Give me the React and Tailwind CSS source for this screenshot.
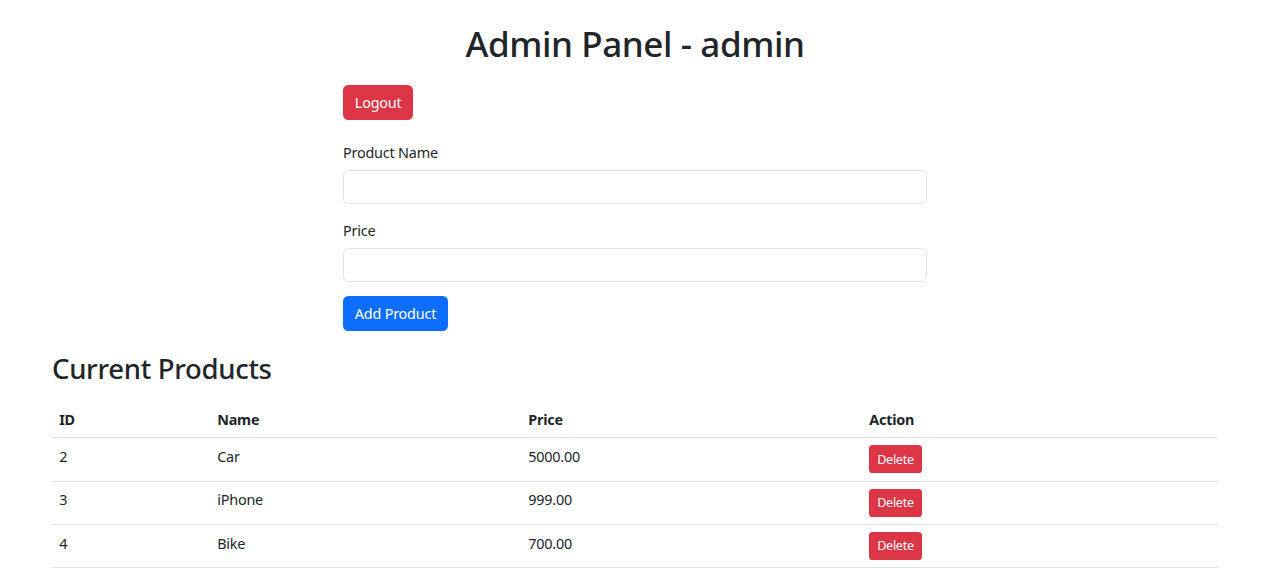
const products = [
  { id: 2, name: 'Car', price: '5000.00' },
  { id: 3, name: 'iPhone', price: '999.00' },
  { id: 4, name: 'Bike', price: '700.00' },
];

export default function App() {
  return (
    <div className="min-h-screen bg-white text-[#212529] font-['Noto_Sans',sans-serif] text-[14.4px] leading-[1.5] tracking-[-0.2px]">
      <div className="ml-[52px] w-[1166px] pt-[22px]">
        <h1 className="text-center text-[35px] font-medium leading-[43.2px] mb-[20px] tracking-[-0.4px]">Admin Panel - admin</h1>

        <div className="ml-[291px] w-[584px]">
          <button className="h-[34.4px] px-[11.8px] rounded-[5.4px] bg-[#dc3545] text-white mb-[21.6px] pt-[1px]">Logout</button>

          <div className="mb-[14.4px]">
            <label className="block pt-[1px]">Product Name</label>
            <input className="block w-full h-[34.4px] rounded-[5.4px] border border-[#dee2e6] px-[10.8px] outline-none mt-[6.2px]" />
          </div>
          <div className="mb-[14.4px]">
            <label className="block pt-[1px]">Price</label>
            <input className="block w-full h-[34.4px] rounded-[5.4px] border border-[#dee2e6] px-[10.8px] outline-none mt-[6.2px]" />
          </div>
          <button className="h-[34.4px] px-[11.8px] rounded-[5.4px] bg-[#0d6efd] text-white pt-[1px]">Add Product</button>
        </div>

        <h2 className="mt-[21.6px] mb-[14.4px] text-[27.5px] font-medium leading-[34.56px] tracking-[-0.3px]">Current Products</h2>

        <table className="w-full border-collapse">
          <thead>
            <tr className="border-b border-[#dee2e6]">
              <th className="w-[158px] text-left font-bold px-[7.2px] pt-[8.2px] pb-[6.2px]">ID</th>
              <th className="w-[311px] text-left font-bold px-[7.2px] pt-[8.2px] pb-[6.2px]">Name</th>
              <th className="w-[341px] text-left font-bold px-[7.2px] pt-[8.2px] pb-[6.2px]">Price</th>
              <th className="text-left font-bold px-[7.2px] pt-[8.2px] pb-[6.2px]">Action</th>
            </tr>
          </thead>
          <tbody>
            {products.map(p => (
              <tr key={p.id} className="border-b border-[#dee2e6]">
                <td className="px-[7.2px] pt-[7.8px] pb-[6.2px] align-top">{p.id}</td>
                <td className="px-[7.2px] pt-[7.8px] pb-[6.2px] align-top">{p.name}</td>
                <td className="px-[7.2px] pt-[7.8px] pb-[6.2px] align-top">{p.price}</td>
                <td className="px-[7.2px] py-[7.2px] align-top">
                  <button className="h-[28px] px-[8px] rounded-[3.6px] bg-[#dc3545] text-white text-[12.6px] leading-[1.5] tracking-[-0.3px] pt-[1px]">Delete</button>
                </td>
              </tr>
            ))}
          </tbody>
        </table>
      </div>
    </div>
  );
}
